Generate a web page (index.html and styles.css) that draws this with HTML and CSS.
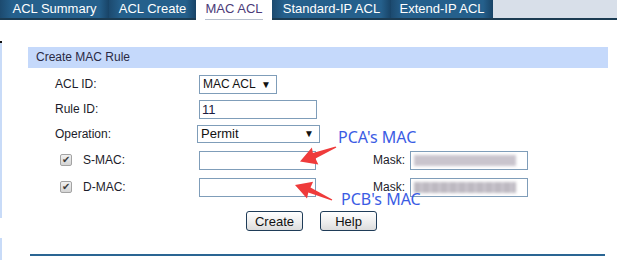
FILE: index.html
```html
<!DOCTYPE html>
<html lang="en">
<head>
    <meta charset="UTF-8">
    <meta name="viewport" content="width=device-width, initial-scale=1.0">
    <title>MAC ACL</title>
    <link rel="stylesheet" href="styles.css">
</head>
<body>
    <!-- Tab bar -->
    <div class="tabs">
        <a class="tab tab-summary">ACL Summary</a>
        <a class="tab tab-create">ACL Create</a>
        <a class="tab tab-mac active"><span>MAC ACL</span></a>
        <a class="tab tab-std">Standard-IP ACL</a>
        <a class="tab tab-ext">Extend-IP ACL</a>
        <div class="tabs-fill"></div>
    </div>

    <div class="frame">
        <div class="panel">
            <div class="panel-title">Create MAC Rule</div>
            <div class="form">
                <div class="row row-1">
                    <span class="label">ACL ID:</span>
                    <div class="select select-acl"><span>MAC ACL</span><span class="caret">&#9660;</span></div>
                </div>
                <div class="row row-2">
                    <span class="label">Rule ID:</span>
                    <div class="input input-rule">11</div>
                </div>
                <div class="row row-3">
                    <span class="label">Operation:</span>
                    <div class="select select-op"><span>Permit</span><span class="caret">&#9660;</span></div>
                </div>
                <div class="row row-4">
                    <span class="check">&#10004;</span>
                    <span class="label label-check">S-MAC:</span>
                    <div class="input input-mac"></div>
                    <span class="mask-label">Mask:</span>
                    <div class="input input-mask"><span class="blur"></span></div>
                </div>
                <div class="row row-5">
                    <span class="check">&#10004;</span>
                    <span class="label label-check">D-MAC:</span>
                    <div class="input input-mac"></div>
                    <span class="mask-label">Mask:</span>
                    <div class="input input-mask"><span class="blur blur-dots"></span></div>
                </div>
                <div class="actions">
                    <button class="btn">Create</button>
                    <button class="btn">Help</button>
                </div>
            </div>
        </div>
        <div class="rule-line"></div>
    </div>

    <!-- Annotations drawn over the form -->
    <svg class="arrows" width="617" height="260" viewBox="0 0 617 260">
        <polygon fill="#ef3b3b" points="336.4,147.6 315.5,158.5 318.3,164.4 300,161.5 311.9,147.5 312.9,153.1 335.6,146.4"/>
        <polygon fill="#ef3b3b" points="332.3,199.4 310.5,187.6 313.1,181.7 295,185 307.0,198.4 308.3,192.5 331.7,200.6"/>
    </svg>
    <div class="note note-a">PCA's MAC</div>
    <div class="note note-b">PCB's MAC</div>
</body>
</html>
```

FILE: styles.css
```css
body {
    margin: 0;
    position: relative;
    font-family: "Liberation Sans", Arial, sans-serif;
    font-size: 12px;
    color: #1c1c2a;
    background: #fff;
}

/* Tabs */
.tabs {
    display: flex;
    height: 20px;
}

.tab {
    box-sizing: border-box;
    height: 20px;
    line-height: 18px;
    font-size: 13px;
    color: #fff;
    text-align: center;
    white-space: nowrap;
    border-bottom: 2px solid #1b3b52;
    background: linear-gradient(to right, #1c4a6f 0, #25608c 12px, #25608c calc(100% - 10px), #184366 100%);
}

.tab-summary { width: 109px; }
.tab-create { width: 87px; }
.tab-mac { width: 76px; }
.tab-std { width: 119px; }
.tab-ext { width: 102px; }

.tab.active {
    background: #fff;
    color: #4b3a78;
    border-bottom: none;
}

.tab.active span {
    display: inline-block;
    height: 19px;
    border-bottom: 1px solid #b6bfcc;
}

.tabs-fill {
    flex: 1;
    height: 20px;
    box-sizing: border-box;
    background: #d8dfe9;
    border-bottom: 2px solid #1b3b52;
}

/* Frame */
.frame {
    margin-top: 21px;
    height: 219px;
    background:
        linear-gradient(to bottom, #111 0 2px, #c8dbf8 2px 177px, transparent 177px 197px, #c8dbf8 197px) no-repeat left top / 2px 100%;
}

.panel {
    margin: 0 9px 0 28px;
    padding-top: 6px;
}

.panel-title {
    height: 21px;
    line-height: 21px;
    padding-left: 8px;
    background: #c5d9fb;
    color: #2a2a44;
}

.form {
    padding: 7px 0 0 27px;
}

.row {
    display: flex;
    align-items: flex-start;
}

.row-1, .row-2 { height: 25px; }
.row-3 { height: 26px; }
.row-4 { height: 27px; }
.row-5 { height: 19px; }

.label {
    width: 144px;
    line-height: 19px;
}

.label-check {
    width: 116px;
}

.check {
    box-sizing: border-box;
    width: 12px;
    height: 12px;
    margin: 3px 11px 0 5px;
    border: 1px solid #a3a3a3;
    border-radius: 2px;
    background: linear-gradient(#f1f1f1, #d4d4d4);
    color: #3b3b3b;
    font-size: 10px;
    line-height: 10px;
    text-align: center;
}

.input, .select {
    box-sizing: border-box;
    height: 19px;
    line-height: 17px;
    border: 1px solid #7f9db9;
    background: #fff;
    padding-left: 2px;
    color: #1b1b40;
    font-size: 13px;
}

.select {
    display: flex;
    justify-content: space-between;
    white-space: nowrap;
    color: #111;
    padding: 0 5px 0 3px;
}

.select-acl { width: 78px; font-size: 12px; }
.select-op { width: 123px; margin-left: -2px; height: 18px; line-height: 16px; }

.caret {
    font-size: 10px;
}

.input-rule { width: 118px; }
.input-mac { width: 117px; }

.mask-label {
    margin-left: 57px;
    width: 37px;
    line-height: 19px;
}

.input-mask {
    width: 118px;
    padding: 3px 0 0 3px;
}

.blur {
    display: block;
    width: 102px;
    height: 11px;
    background: #c9c4cd;
    filter: blur(1.5px);
}

.blur-dots {
    background: repeating-linear-gradient(to right, #bcb8c0 0 6px, #c9c5cd 6px 9px);
}

/* Buttons */
.actions {
    display: flex;
    gap: 17px;
    margin: 14px 0 0 191px;
}

.btn {
    box-sizing: border-box;
    width: 57px;
    height: 20px;
    padding: 0;
    font-family: "Liberation Sans", Arial, sans-serif;
    font-size: 13px;
    color: #111;
    border: 1px solid #1f3c58;
    border-radius: 3px;
    background: linear-gradient(#ffffff, #ececec 60%, #dcdcdc);
}

.rule-line {
    width: 575px;
    height: 2px;
    margin: 23px 0 0 30px;
    background: #2a6593;
}

/* Annotations */
.arrows {
    position: absolute;
    left: 0;
    top: 0;
}

.note {
    position: absolute;
    font-family: "Noto Sans", "Liberation Sans", sans-serif;
    font-size: 16px;
    line-height: 20px;
    color: #3b5ce4;
}

.note-a { left: 338px; top: 127px; }
.note-b { left: 341px; top: 189px; }
```
